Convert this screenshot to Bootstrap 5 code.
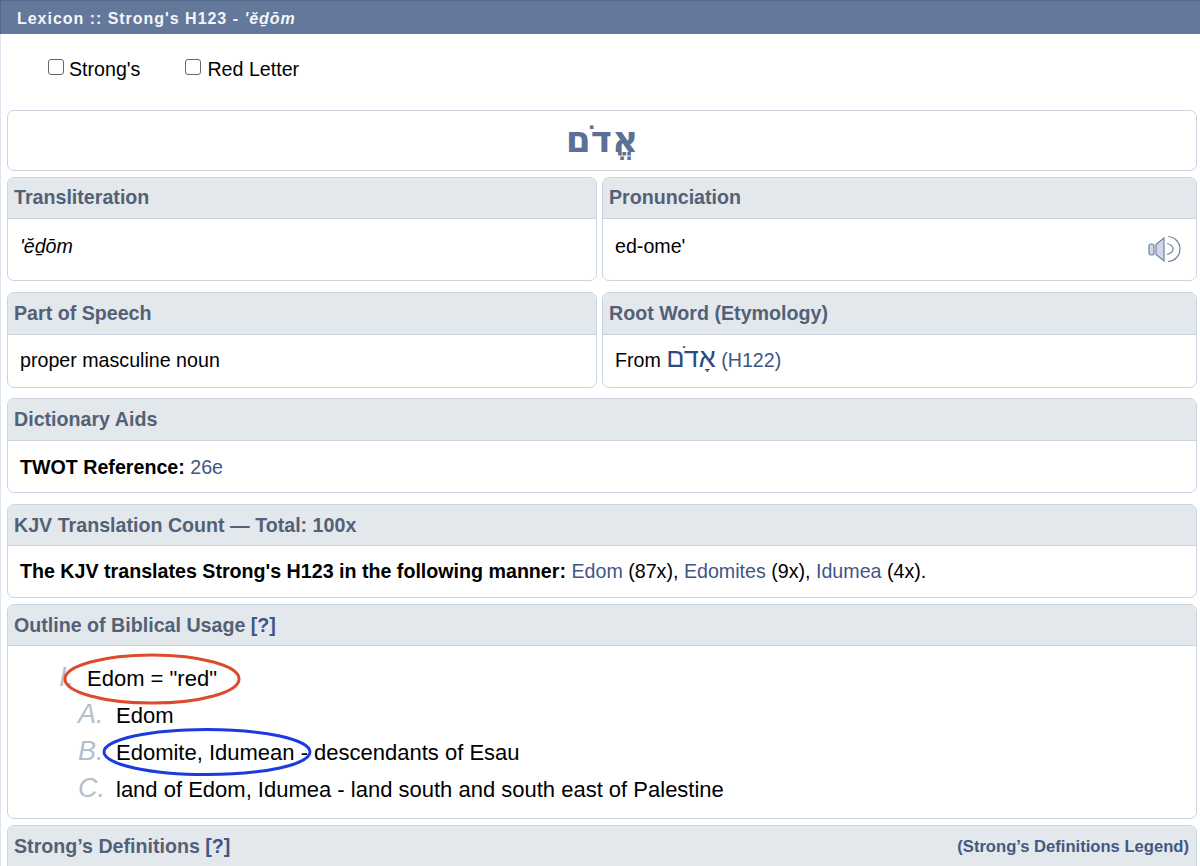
<!DOCTYPE html>
<html lang="en">
<head>
<meta charset="utf-8">
<title>Lexicon</title>
<link href="https://cdn.jsdelivr.net/npm/bootstrap@5.3.0/dist/css/bootstrap.min.css" rel="stylesheet">
<style>
html,body{height:866px;overflow:hidden;}
body{font-family:"Liberation Sans",Arial,sans-serif;font-size:19.65px;line-height:24px;color:#000;background:#fff;position:relative;}
.lex-title{height:34px;background:#64789b;border-top:1px solid #55698c;border-left:1px solid #55698c;color:#f4f6fa;font-size:16px;font-weight:700;letter-spacing:.97px;padding:0 0 0 16px;line-height:36px;}
.lex-page{padding:0 3px 0 6px;border-left:1px solid #dbe6f0;}
.lex-opts{height:76px;padding:23px 0 0 41px;gap:45px;align-items:flex-start;}
.lex-opts .form-check-input{width:16px;height:16px;margin:0 6px 0 0;border-radius:3px;border:1px solid #666;position:relative;top:-2px;}
.lex-opts label{display:flex;align-items:center;}
.lex-opts label:first-child .form-check-input{margin-right:5px;}
.lex-card{border:1px solid #c9d4e0;border-radius:7px;overflow:hidden;background:#fff;}
.lex-card .card-header{height:41px;padding:0 7px 0 6px;background:#e3e8ed;border-bottom:1px solid #c9d4e0;border-radius:0;color:#536177;font-weight:700;line-height:41px;font-size:19.65px;}
.lex-card .card-body{padding:0 12px;flex:none;}
.lex-head{height:61px;margin-bottom:6px;color:#5b7096;font-family:"DejaVu Sans",sans-serif;font-weight:700;font-size:36px;line-height:57px;text-align:center;}
.lex-row{display:grid;grid-template-columns:590px 595px;column-gap:5px;}
.lex-a{height:104px;margin-bottom:11px;}
.lex-a .card-header{line-height:39px;}
.lex-a .card-body{padding-top:15px;}
.lex-b{height:96px;margin-bottom:10px;}
.lex-b .card-header{height:42px;}
.lex-b .card-body{padding-top:13px;}
.lex-c{height:95px;margin-bottom:11px;}
.lex-c .card-header{height:42px;}
.lex-c .card-body{padding-top:14px;}
.lex-d{height:94px;margin-bottom:6px;}
.lex-d .card-body{padding-top:13px;}
.lex-e{height:215px;margin-bottom:6px;}
.lex-f{height:60px;}
.lex-link{color:#3e5685;text-decoration:none;}
.lex-heb{font-family:"Liberation Sans",sans-serif;font-size:27px;line-height:20px;color:#2f4a80;}
.lex-q{color:#3e5685;}
.lex-sound{position:absolute;right:14px;bottom:17px;}
.lex-rel{position:relative;}
.lex-legend{font-size:16.6px;color:#43587f;}
.lex-ol{padding:21px 0 0 51px;margin:0;font-size:22px;}
.lex-item{display:flex;height:37px;}
.lex-num{color:#b3bfcb;font-style:italic;font-size:27px;width:38px;flex:none;text-align:left;line-height:20px;}
.lex-sub{padding-left:19px;}
.lex-top .lex-num{width:28px;}
.lex-over{position:absolute;left:0;top:0;pointer-events:none;}
</style>
</head>
<body>
<div class="lex-title">Lexicon :: Strong's H123 - <i>'ĕḏōm</i></div>
<div class="lex-page">
  <div class="lex-opts d-flex">
    <label><input class="form-check-input" type="checkbox">Strong's</label>
    <label><input class="form-check-input" type="checkbox">Red Letter</label>
  </div>
  <div class="card lex-card lex-head" lang="he" dir="rtl">אֱדֹם</div>
  <div class="lex-row">
    <div class="card lex-card lex-a">
      <div class="card-header">Transliteration</div>
      <div class="card-body"><i>'ĕḏōm</i></div>
    </div>
    <div class="card lex-card lex-a lex-rel">
      <div class="card-header">Pronunciation</div>
      <div class="card-body">ed-ome'</div>
      <svg class="lex-sound" width="34" height="28" viewBox="0 0 34 28" fill="none" stroke="#6f82a3" stroke-width="1.2"><rect x="1" y="9" width="5" height="11" rx="2" fill="#cfd8e4"/><path d="M8 9.500 16 3v23l-8-6.500z" fill="#cfd8e4"/><path d="M19 8.500c4 1 6 3.200 6 5.500s-2 4.500-6 5.500"/><path d="M20 1.500c7 .5 12 6 12 12.500s-5 12-12 12.500"/></svg>
    </div>
    <div class="card lex-card lex-b">
      <div class="card-header">Part of Speech</div>
      <div class="card-body">proper masculine noun</div>
    </div>
    <div class="card lex-card lex-b">
      <div class="card-header">Root Word (Etymology)</div>
      <div class="card-body">From <span class="lex-heb" lang="he">אָדֹם</span> <a class="lex-link" href="#">(H122)</a></div>
    </div>
  </div>
  <div class="card lex-card lex-c">
    <div class="card-header">Dictionary Aids</div>
    <div class="card-body"><b>TWOT Reference:</b> <a class="lex-link" href="#">26e</a></div>
  </div>
  <div class="card lex-card lex-d">
    <div class="card-header">KJV Translation Count — Total: 100x</div>
    <div class="card-body"><b>The KJV translates Strong's H123 in the following manner:</b> <a class="lex-link" href="#">Edom</a> (87x), <a class="lex-link" href="#">Edomites</a> (9x), <a class="lex-link" href="#">Idumea</a> (4x).</div>
  </div>
  <div class="card lex-card lex-e">
    <div class="card-header">Outline of Biblical Usage <span class="lex-q">[?]</span></div>
    <div class="lex-ol">
      <div class="lex-item lex-top"><span class="lex-num">I.</span><span>Edom = "red"</span></div>
      <div class="lex-item lex-sub"><span class="lex-num">A.</span><span>Edom</span></div>
      <div class="lex-item lex-sub"><span class="lex-num">B.</span><span>Edomite, Idumean - descendants of Esau</span></div>
      <div class="lex-item lex-sub"><span class="lex-num">C.</span><span>land of Edom, Idumea - land south and south east of Palestine</span></div>
    </div>
  </div>
  <div class="card lex-card lex-f">
    <div class="card-header d-flex justify-content-between"><span>Strong’s Definitions <span class="lex-q">[?]</span></span><span class="lex-legend">(Strong’s Definitions Legend)</span></div>
  </div>
</div>
<svg class="lex-over" width="1200" height="866" fill="none" stroke-width="3"><ellipse cx="152" cy="679" rx="87" ry="24" stroke="#dd4a2c"/><ellipse cx="207" cy="752" rx="103" ry="22.500" stroke="#1c3ae0"/></svg>
<script src="https://cdn.jsdelivr.net/npm/bootstrap@5.3.0/dist/js/bootstrap.bundle.min.js"></script>
</body>
</html>
